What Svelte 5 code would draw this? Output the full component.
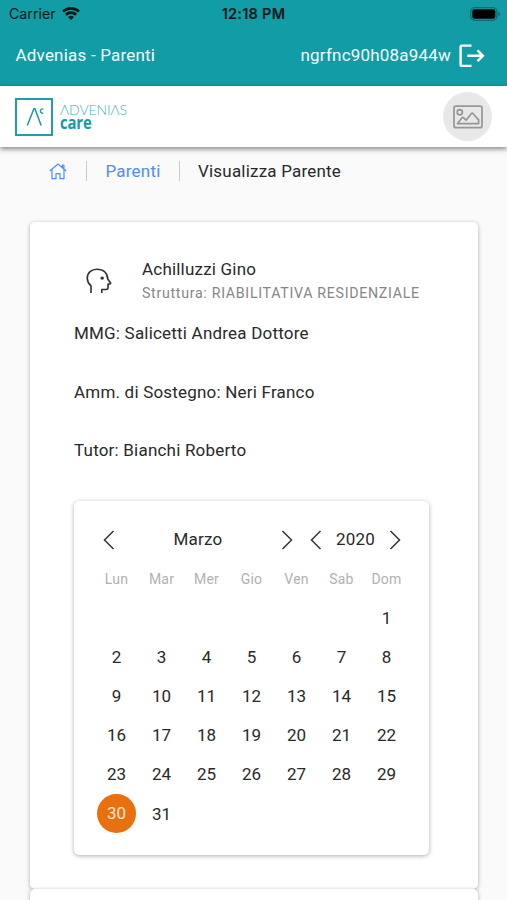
<script>
  const weekdays = ['Lun', 'Mar', 'Mer', 'Gio', 'Ven', 'Sab', 'Dom'];
  const leading = 6;
  const today = 30;
  const days = [...Array(leading).fill(null), ...Array.from({ length: 31 }, (_, i) => i + 1)];
  const facts = ['MMG: Salicetti Andrea Dottore', 'Amm. di Sostegno: Neri Franco', 'Tutor: Bianchi Roberto'];
</script>

{#snippet chevron(right)}
  <svg class="chevron" class:right width="12" height="20" viewBox="0 0 12 20">
    <path d="M10.5 1 1.5 10l9 9" fill="none" stroke="#333" stroke-width="1.5" />
  </svg>
{/snippet}

<div class="screen">
  <header class="top">
    <div class="status">
      <div class="carrier">
        <span>Carrier</span>
        <svg width="18" height="13" viewBox="0 0 18 13" fill="none" stroke="#071517" stroke-width="2.7">
          <path d="M1 4.6a11.5 11.5 0 0 1 16 0M3.9 7.7a7.3 7.3 0 0 1 10.2 0" />
          <path d="M9 13 6 10.1a4.3 4.3 0 0 1 6 0z" fill="#071517" stroke="none" />
        </svg>
      </div>
      <span class="clock">12:18 PM</span>
      <svg class="battery" width="31" height="14" viewBox="0 0 31 14">
        <rect x=".7" y=".7" width="26.2" height="12.6" rx="4" fill="none" stroke="#0b6b70" stroke-width="1.3" />
        <rect x="2.3" y="2.3" width="23" height="9.4" rx="2" fill="#000" />
        <path d="M28.3 4.7c2.3.8 2.3 3.8 0 4.6z" fill="#0b6b70" />
      </svg>
    </div>
    <div class="titlebar">
      <span class="title">Advenias - Parenti</span>
      <span class="user">ngrfnc90h08a944w</span>
      <svg width="26" height="24" viewBox="0 0 26 24" fill="none" stroke="#fff" stroke-width="2.4">
        <path d="M12.5 1.6H3Q1.6 1.6 1.6 3v17.5q0 1.4 1.4 1.4h9.5M8.3 11.8h15.5M18.5 6.4l5.4 5.4-5.4 5.4" />
      </svg>
    </div>
  </header>

  <div class="brandbar">
    <div class="brand">
      <svg width="38" height="38" viewBox="0 0 38 38" fill="none" stroke="#159ba1">
        <rect x="1" y="1" width="36" height="36" stroke-width="1.9" />
        <path d="m12.3 27.5 6.6-16.7 1 0 6.3 16.7" stroke-width="1.5" />
        <path d="M28.4 11.1c-3.5-1.4-4.4 4.8-.2 4" stroke-width="1.4" />
      </svg>
      <div class="wordmark">
        <span class="advenias">ΛDVENIΛS</span>
        <b>care</b>
      </div>
    </div>
    <div class="avatar">
      <svg width="30" height="24" viewBox="0 0 30 24" fill="none" stroke="#969696" stroke-width="1.7" stroke-linejoin="round">
        <rect x="1" y="1.2" width="28" height="21.5" rx="2" />
        <circle cx="6.8" cy="7.2" r="2.6" />
        <path d="M4.4 18.7 9 12.8q.8-.8 1.6 0l2.5 2.4 5.1-6.5q1-1 1.9 0l5.5 6.2v3.8z" />
      </svg>
    </div>
  </div>

  <nav class="crumbs">
    <svg width="18" height="17" viewBox="0 0 18 17" fill="none" stroke="#4f8df5" stroke-width="1.2" stroke-linejoin="round">
      <path d="m.8 8 8.2-7 8.2 7M13.4 4.5V2.2h1.5v3.6M3 6.5v9.2h4v-5h4v5h4V6.5" />
    </svg>
    <a href="#parenti">Parenti</a>
    <span class="current">Visualizza Parente</span>
  </nav>

  <main>
    <section class="card person">
      <div class="identity">
        <svg width="26" height="26" viewBox="0 0 27 27" fill="none" stroke="#333" stroke-width="1.7" stroke-linejoin="round">
          <path d="M5.2 26v-7.4C3 16.5 1.3 14 1.3 10.6 1.3 5 5.7 1.3 11.2 1.3c7 0 11 4.2 11.5 10.5l2.7 3.6q.4.9-.6 1.2h-1.9v3.7q0 2-2 2h-4.5V26" />
          <circle cx="16.8" cy="10.5" r="1.8" fill="#333" stroke="none" />
        </svg>
        <div class="names">
          <span>Achilluzzi Gino</span>
          <small>Struttura: RIABILITATIVA RESIDENZIALE</small>
        </div>
      </div>
      {#each facts as fact}
        <p>{fact}</p>
      {/each}

      <div class="card calendar">
        <div class="pickers">
          {@render chevron(false)}
          <span class="month">Marzo</span>
          {@render chevron(true)}
          {@render chevron(false)}
          <span class="year">2020</span>
          {@render chevron(true)}
        </div>
        <div class="grid weekdays">
          {#each weekdays as name}<span>{name}</span>{/each}
        </div>
        <div class="grid">
          {#each days as day}
            <span class="day"><span class:today={day === today}>{day ?? ''}</span></span>
          {/each}
        </div>
      </div>
    </section>
    <section class="card next"></section>
  </main>
</div>

<style>
  :global(body) { margin: 0; }
  .screen {
    width: 507px;
    height: 900px;
    overflow: hidden;
    background: #fafafa;
    font: 17px/20px Roboto, sans-serif;
    letter-spacing: 0.2px;
    color: #292929;
    display: flex;
    flex-direction: column;
  }
  svg { display: block; flex: none; }
  .top { height: 86px; flex: none; background: #129ca5; }
  .status {
    height: 27px;
    padding: 0 6px 0 9px;
    display: grid;
    grid-template-columns: 1fr auto 1fr;
    align-items: center;
    font: 14.5px/18px Inter, sans-serif;
    letter-spacing: 0;
    color: #071517;
  }
  .carrier { display: flex; align-items: center; gap: 6px; }
  .carrier span { font-size: 14.2px; }
  .clock { font-weight: 600; font-size: 14.5px; letter-spacing: 0.25px; padding-right: 3px; }
  .battery { justify-self: end; }
  .titlebar { height: 57px; padding: 0 22px 0 15.5px; display: flex; align-items: center; color: #f4fefe; }
  .titlebar span { padding-bottom: 2px; }
  .user { margin: 0 8px 0 auto; }
  .brandbar {
    height: 61px;
    flex: none;
    box-sizing: border-box;
    padding: 0 15px;
    background: #fff;
    box-shadow: 0 2px 5px rgba(0, 0, 0, 0.48);
    display: flex;
    align-items: center;
    justify-content: space-between;
    z-index: 1;
  }
  .brand { display: flex; gap: 7px; color: #159ba1; }
  .wordmark { display: flex; flex-direction: column; align-items: flex-start; padding-top: 5px; }
  .advenias { font: 300 14px/14px Lato, sans-serif; letter-spacing: -0.1px; color: #45b3b8; }
  .wordmark b {
    font: 700 17.5px/11px "Open Sans", sans-serif;
    letter-spacing: -0.2px;
    transform: scaleX(0.85);
    transform-origin: left;
  }
  .avatar { width: 49px; height: 49px; border-radius: 50%; background: #e8e8e8; display: grid; place-items: center; }
  .crumbs { height: 20px; padding: 14px 0 0 49px; display: flex; align-items: center; }
  .crumbs a { color: #4f8df5; text-decoration: none; padding-left: 18.5px; margin-left: 19px; border-left: 1px solid #c9c9c9; }
  .current { padding-left: 18px; margin-left: 18.5px; border-left: 1px solid #c9c9c9; }
  main { padding: 41px 29px 0 30px; }
  .card { background: #fff; border-radius: 5px; box-shadow: 0 1px 4px rgba(0, 0, 0, 0.32); }
  .person { height: 667px; box-sizing: border-box; padding: 37px 44px 0; }
  .identity { display: flex; gap: 30.5px; padding-left: 11.5px; align-items: center; height: 44px; }
  .names { display: flex; flex-direction: column; gap: 4px; white-space: nowrap; }
  small { font-size: 14.2px; color: #868686; letter-spacing: 0.7px; }
  p { margin: 0; height: 58.5px; }
  p:first-of-type { margin-top: 20px; }
  .calendar { height: 354px; margin: 2px 5px 0 0; width: 355px; box-sizing: border-box; padding: 28px 20px 0; }
  .pickers { display: flex; align-items: center; height: 22px; padding: 0 8px 0 9px; }
  .right { transform: scaleX(-1); }
  .month { flex: 1; text-align: center; }
  .pickers svg:nth-of-type(2) { margin-right: -1px; }
  .pickers svg:nth-of-type(3) { margin-left: 18px; }
  .pickers span { padding-bottom: 1px; }
  .year { width: 67px; text-align: center; }
  .grid { display: grid; grid-template-columns: repeat(7, 45px); text-align: center; }
  .weekdays { margin: 18px 0 10px; font-size: 14px; color: #b1b1b1; }
  .day { height: 39.1px; display: grid; place-items: center; letter-spacing: 0; }
  .today { width: 39px; line-height: 39px; border-radius: 50%; background: #e9700f; color: #ffe6cf; }
  .next { height: 60px; }
</style>
